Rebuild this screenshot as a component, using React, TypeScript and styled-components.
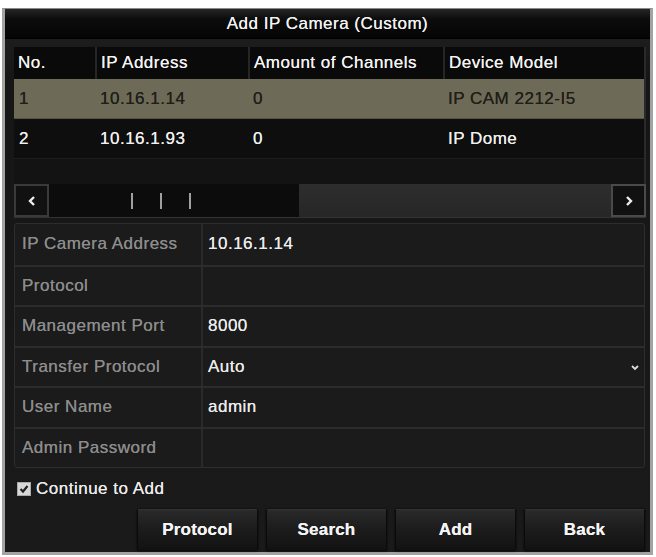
import styled, { createGlobalStyle } from "styled-components"

const GlobalStyle = createGlobalStyle`
body {
    margin: 0;
    background: #ffffff;
    font-family: "Liberation Sans", Arial, sans-serif;
}
`

const cameras = [
    { no: "1", ip: "10.16.1.14", channels: "0", model: "IP CAM 2212-I5" },
    { no: "2", ip: "10.16.1.93", channels: "0", model: "IP Dome" },
]

const fields = [
    { label: "IP Camera Address", value: "10.16.1.14" },
    { label: "Protocol", value: "" },
    { label: "Management Port", value: "8000" },
    { label: "Transfer Protocol", value: "Auto", select: true },
    { label: "User Name", value: "admin" },
    { label: "Admin Password", value: "" },
]

const buttons = ["Protocol", "Search", "Add", "Back"]

const App = () => {
    return <>
        <GlobalStyle />
        <Dialog>
            <TitleBar>Add IP Camera (Custom)</TitleBar>
            <Body>
                <TableBox>
                    <HeadRow>
                        <HeadCell>No.</HeadCell>
                        <HeadCell>IP Address</HeadCell>
                        <HeadCell>Amount of Channels</HeadCell>
                        <HeadCell>Device Model</HeadCell>
                    </HeadRow>
                    {cameras.map((c, i) => (
                        <Row key={c.no} selected={i === 0}>
                            <Cell>{c.no}</Cell>
                            <Cell>{c.ip}</Cell>
                            <Cell>{c.channels}</Cell>
                            <Cell>{c.model}</Cell>
                        </Row>
                    ))}
                    <EmptyRow />
                </TableBox>

                <ScrollBar>
                    <ScrollBtn>
                        <svg width="10" height="12" viewBox="0 0 10 12"><path d="M7 2 L3 6 L7 10" stroke="#eee" strokeWidth="2.4" fill="none" /></svg>
                    </ScrollBtn>
                    <Thumb>
                        <Grip /><Grip /><Grip />
                    </Thumb>
                    <Track />
                    <ScrollBtn light>
                        <svg width="10" height="12" viewBox="0 0 10 12"><path d="M3 2 L7 6 L3 10" stroke="#eee" strokeWidth="2.4" fill="none" /></svg>
                    </ScrollBtn>
                </ScrollBar>

                <Form>
                    {fields.map(f => (
                        <FormRow key={f.label}>
                            <Label>{f.label}</Label>
                            <Value>
                                {f.value}
                                {f.select && <Chevron>
                                    <svg width="10" height="8" viewBox="0 0 10 8"><path d="M2 2 L5 5 L8 2" stroke="#ddd" strokeWidth="1.8" fill="none" /></svg>
                                </Chevron>}
                            </Value>
                        </FormRow>
                    ))}
                </Form>

                <CheckRow>
                    <CheckBox>
                        <svg width="12" height="12" viewBox="0 0 12 12"><path d="M2.5 6 L5 8.5 L9.5 3" stroke="#222" strokeWidth="2.2" fill="none" /></svg>
                    </CheckBox>
                    Continue to Add
                </CheckRow>

                <ButtonBar>
                    {buttons.map(b => <Button key={b}>{b}</Button>)}
                </ButtonBar>
            </Body>
        </Dialog>
    </>
}

export default App

const Dialog = styled.div`
box-sizing: border-box;
margin: 8px 0 0 2px;
width: 651px;
height: 547px;
background: #1a1a1a;
border: 3px solid #a3a3a3;
border-top: 1px solid #8a8a8a;
display: flex;
flex-direction: column;
font-size: 17px;
letter-spacing: 0.5px;
text-shadow: 0 0 0.6px currentColor;
`

const TitleBar = styled.div`
height: 29px;
display: flex;
align-items: center;
justify-content: center;
color: #f2f2f2;
background: linear-gradient(#262626 0%, #0c0c0c 35%, #050505 100%);
border-bottom: 1px solid #000;
`

const Body = styled.div`
flex: 1;
display: flex;
flex-direction: column;
padding: 8px 4px 0 9px;
background: linear-gradient(#1d1d1d, #161616 40px, #1a1a1a);
`

const TableBox = styled.div`
background: #141414;
border-right: 2px solid #2a2a2a;
`

const cols = `grid-template-columns: 81px 153px 195px 1fr;`

const HeadRow = styled.div`
display: grid;
${cols}
height: 32px;
background: #0a0a0a;
`

const HeadCell = styled.div`
display: flex;
align-items: center;
padding-left: 4px;
color: #f4f4f4;
border-left: 2px solid #262626;
&:first-child {
    border-left: none;
}
`

const Row = styled.div<{ selected?: boolean }>`
display: grid;
${cols}
height: 40px;
background: ${p => p.selected ? "#6d6b57" : "#0e0e0e"};
color: ${p => p.selected ? "#1f1e17" : "#f0f0f0"};
border-bottom: 1px solid ${p => p.selected ? "#55543f" : "#1e1e1e"};
box-sizing: border-box;
`

const Cell = styled.div`
display: flex;
align-items: center;
padding-left: 5px;
`

const EmptyRow = styled.div`
height: 25px;
background: #131313;
`

const ScrollBar = styled.div`
display: flex;
height: 33px;
background: #2a2a2a;
border-bottom: 1px solid #333;
`

const ScrollBtn = styled.div<{ light?: boolean }>`
box-sizing: border-box;
width: 35px;
display: flex;
align-items: center;
justify-content: center;
background: #111;
border: 2px solid ${p => p.light ? "#4a4a4a" : "#3a3a3a"};
`

const Thumb = styled.div`
width: 250px;
background: #0c0c0c;
display: flex;
align-items: center;
gap: 27px;
padding-left: 82px;
box-sizing: border-box;
`

const Grip = styled.div`
width: 2px;
height: 16px;
background: #a0a0a0;
`

const Track = styled.div`
flex: 1;
background: linear-gradient(#2e2e2e, #262626);
`

const Form = styled.div`
margin-top: 5px;
margin-right: 1px;
background: #1b1b1b;
border: 1px solid #2d2d2d;
border-radius: 3px;
`

const FormRow = styled.div`
display: grid;
grid-template-columns: 188px 1fr;
height: 40.5px;
border-top: 2px solid #2c2c2c;
box-sizing: border-box;
&:first-child {
    border-top: none;
}
`

const Label = styled.div`
display: flex;
align-items: center;
padding-left: 7px;
color: #8c8c8c;
border-right: 2px solid #2a2a2a;
`

const Value = styled.div`
position: relative;
display: flex;
align-items: center;
padding-left: 5px;
color: #ececec;
`

const Chevron = styled.span`
position: absolute;
right: 4px;
top: 16px;
display: flex;
`

const CheckRow = styled.div`
height: 41px;
display: flex;
align-items: center;
gap: 5px;
padding-left: 3px;
color: #ececec;
`

const CheckBox = styled.div`
width: 14px;
height: 14px;
background: #d8d8d8;
border: 1px solid #aaa;
box-sizing: border-box;
display: flex;
align-items: center;
justify-content: center;
`

const ButtonBar = styled.div`
display: flex;
justify-content: flex-end;
gap: 8px;
padding-right: 1px;
`

const Button = styled.div`
box-sizing: border-box;
width: 121px;
height: 42px;
display: flex;
align-items: center;
justify-content: center;
color: #f4f4f4;
font-weight: bold;
letter-spacing: 0.2px;
background: linear-gradient(#2a2a2a 0%, #1e1e1e 40%, #121212 100%);
border: 1px solid #0b0b0b;
border-top-color: #333;
border-radius: 2px;
box-shadow: 0 0 2px #000;
`
